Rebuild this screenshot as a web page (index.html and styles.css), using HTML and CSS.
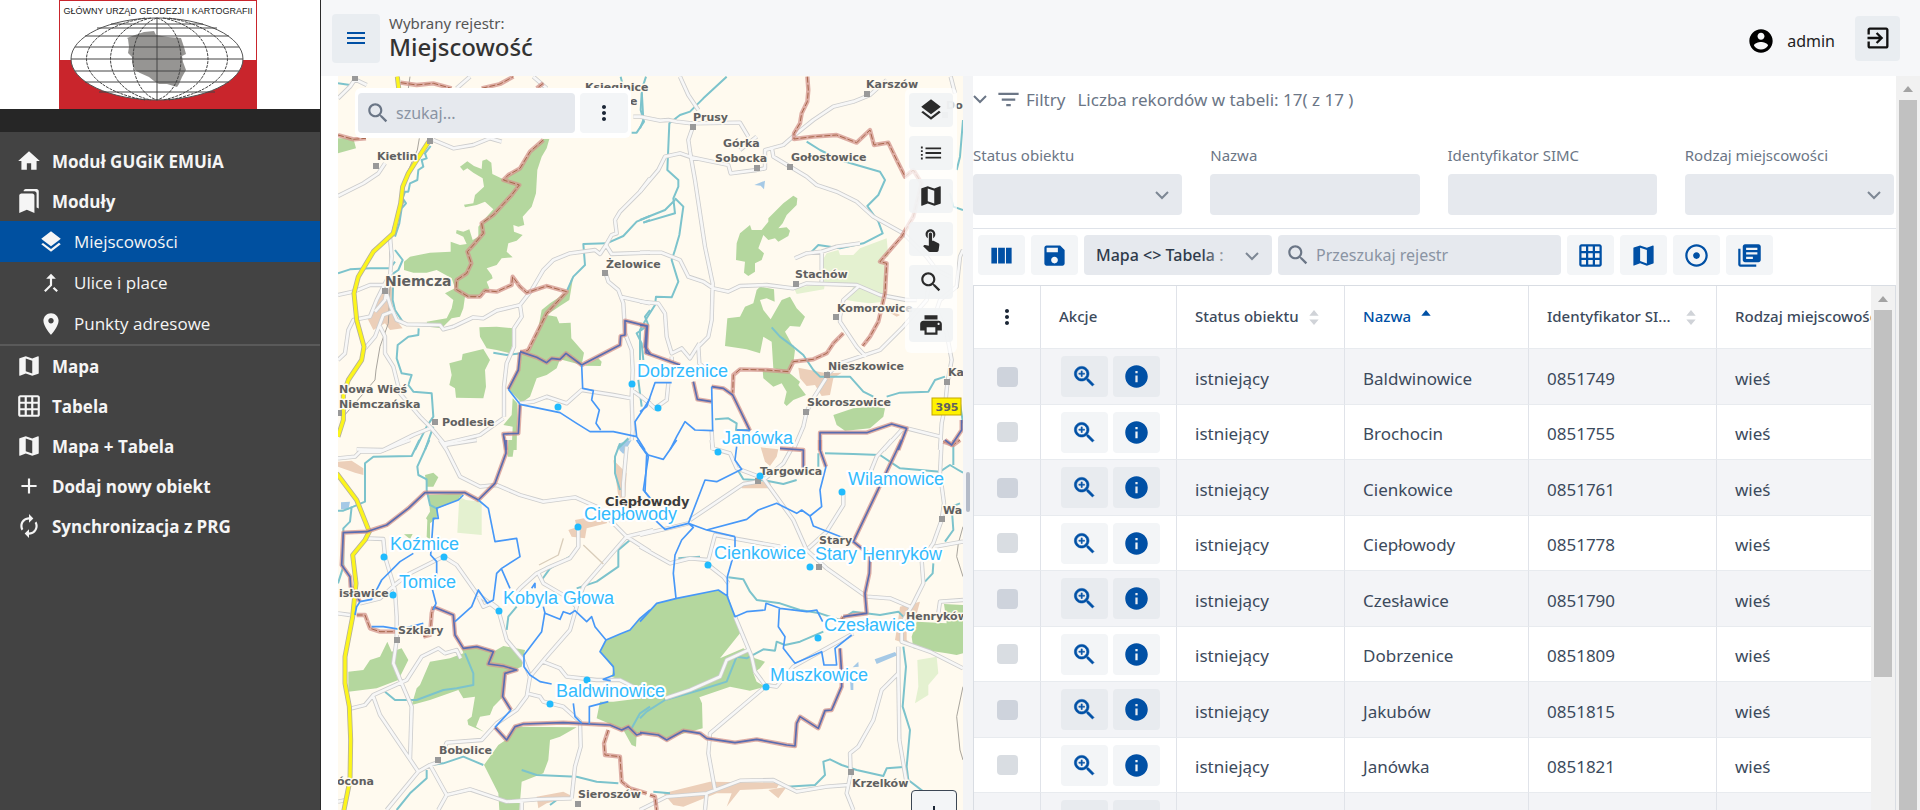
FILE: index.html
```html
<!DOCTYPE html>
<html lang="pl">
<head>
<meta charset="utf-8">
<title>EMUiA – Miejscowość</title>
<meta name="viewport" content="width=device-width, initial-scale=1">
<link rel="stylesheet" href="styles.css">
</head>
<body>
<svg class="sprite" aria-hidden="true">
  <symbol id="i-home" viewBox="0 0 24 24"><path d="M10 20v-6h4v6h5v-8h3L12 3 2 12h3v8z"/></symbol>
  <symbol id="i-bookmarks" viewBox="0 0 24 24"><path d="M19 18l2 1V3c0-1.1-.9-2-2-2H8.99C7.89 1 7 1.9 7 3h10c1.1 0 2 .9 2 2v13zM15 5H5c-1.1 0-2 .9-2 2v16l7-3 7 3V7c0-1.1-.9-2-2-2z"/></symbol>
  <symbol id="i-layers" viewBox="0 0 24 24"><path d="M11.99 18.54l-7.37-5.73L3 14.07l9 7 9-7-1.63-1.27-7.38 5.74zM12 16l7.36-5.73L21 9l-9-7-9 7 1.63 1.27L12 16z"/></symbol>
  <symbol id="i-merge" viewBox="0 0 24 24"><path d="M17 20.41L18.41 19 15 15.59 13.59 17 17 20.41zM7.5 8H11v5.59L5.59 19 7 20.41l6-6V8h3.5L12 3.5 7.5 8z"/></symbol>
  <symbol id="i-place" viewBox="0 0 24 24"><path d="M12 2C8.13 2 5 5.13 5 9c0 5.25 7 13 7 13s7-7.75 7-13c0-3.87-3.13-7-7-7zm0 9.5c-1.38 0-2.5-1.12-2.5-2.5s1.12-2.5 2.5-2.5 2.5 1.12 2.5 2.5-1.12 2.5-2.5 2.5z"/></symbol>
  <symbol id="i-map" viewBox="0 0 24 24"><path d="M20.5 3l-.16.03L15 5.1 9 3 3.36 4.9c-.21.07-.36.25-.36.48V20.5c0 .28.22.5.5.5l.16-.03L9 18.9l6 2.1 5.64-1.9c.21-.07.36-.25.36-.48V3.5c0-.28-.22-.5-.5-.5zM15 19l-6-2.11V5l6 2.11V19z"/></symbol>
  <symbol id="i-grid" viewBox="0 0 24 24"><path d="M20 2H4c-1.1 0-2 .9-2 2v16c0 1.1.9 2 2 2h16c1.1 0 2-.9 2-2V4c0-1.1-.9-2-2-2zM8 20H4v-4h4v4zm0-6H4v-4h4v4zm0-6H4V4h4v4zm6 12h-4v-4h4v4zm0-6h-4v-4h4v4zm0-6h-4V4h4v4zm6 12h-4v-4h4v4zm0-6h-4v-4h4v4zm0-6h-4V4h4v4z"/></symbol>
  <symbol id="i-add" viewBox="0 0 24 24"><path d="M19 13h-6v6h-2v-6H5v-2h6V5h2v6h6v2z"/></symbol>
  <symbol id="i-sync" viewBox="0 0 24 24"><path d="M12 6v3l4-4-4-4v3c-4.42 0-8 3.58-8 8 0 1.57.46 3.03 1.24 4.26L6.7 14.8c-.45-.83-.7-1.79-.7-2.8 0-3.31 2.69-6 6-6zm6.76 1.74L17.3 9.2c.44.84.7 1.79.7 2.8 0 3.31-2.69 6-6 6v-3l-4 4 4 4v-3c4.42 0 8-3.58 8-8 0-1.57-.46-3.03-1.24-4.26z"/></symbol>
  <symbol id="i-menu" viewBox="0 0 24 24"><path d="M3 18h18v-2H3v2zm0-5h18v-2H3v2zm0-7v2h18V6H3z"/></symbol>
  <symbol id="i-search" viewBox="0 0 24 24"><path d="M15.5 14h-.79l-.28-.27C15.41 12.59 16 11.11 16 9.5 16 5.91 13.09 3 9.5 3S3 5.91 3 9.5 5.91 16 9.5 16c1.61 0 3.09-.59 4.23-1.57l.27.28v.79l5 4.99L20.49 19l-4.99-5zm-6 0C7.01 14 5 11.99 5 9.5S7.01 5 9.5 5 14 7.01 14 9.5 11.99 14 9.5 14z"/></symbol>
  <symbol id="i-zoom" viewBox="0 0 24 24"><path d="M15.5 14h-.79l-.28-.27C15.41 12.59 16 11.11 16 9.5 16 5.91 13.09 3 9.5 3S3 5.91 3 9.5 5.91 16 9.5 16c1.61 0 3.09-.59 4.23-1.57l.27.28v.79l5 4.99L20.49 19l-4.99-5zm-6 0C7.01 14 5 11.99 5 9.5S7.01 5 9.5 5 14 7.01 14 9.5 11.99 14 9.5 14zm2.500-4h-2v2H9v-2H7V9h2V7h1v2h2v1z"/></symbol>
  <symbol id="i-more" viewBox="0 0 24 24"><path d="M12 8c1.1 0 2-.9 2-2s-.9-2-2-2-2 .9-2 2 .9 2 2 2zm0 2c-1.1 0-2 .9-2 2s.9 2 2 2 2-.9 2-2-.9-2-2-2zm0 6c-1.1 0-2 .9-2 2s.9 2 2 2 2-.9 2-2-.9-2-2-2z"/></symbol>
  <symbol id="i-list" viewBox="0 0 24 24"><path d="M1 5h2v2H1zM1 9h2v2H1zM1 13h2v2H1zM1 17h2v2H1zM6 6h17v2H6zM6 11h17v2H6zM6 16h17v2H6z"/></symbol>
  <symbol id="i-touch" viewBox="0 0 24 24"><path d="M9 11.24V7.5C9 6.12 10.12 5 11.5 5S14 6.12 14 7.5v3.74c1.21-.81 2-2.18 2-3.74C16 5.01 13.99 3 11.5 3S7 5.01 7 7.5c0 1.56.79 2.93 2 3.74zm9.84 4.63l-4.54-2.26c-.17-.07-.35-.11-.54-.11H13v-6c0-.83-.67-1.5-1.5-1.5S10 6.67 10 7.5v10.74l-3.43-.72c-.08-.01-.15-.03-.24-.03-.31 0-.59.13-.79.33l-.79.8 4.94 4.94c.27.27.65.44 1.06.44h6.79c.75 0 1.33-.55 1.44-1.28l.75-5.27c.01-.07.02-.14.02-.2 0-.62-.38-1.16-.91-1.38z"/></symbol>
  <symbol id="i-print" viewBox="0 0 24 24"><path d="M19 8H5c-1.66 0-3 1.34-3 3v6h4v4h12v-4h4v-6c0-1.66-1.34-3-3-3zm-3 11H8v-5h8v5zm3-7c-.55 0-1-.45-1-1s.45-1 1-1 1 .45 1 1-.45 1-1 1zm-1-9H6v4h12V3z"/></symbol>
  <symbol id="i-user" viewBox="0 0 24 24"><path d="M12 2C6.48 2 2 6.48 2 12s4.48 10 10 10 10-4.48 10-10S17.52 2 12 2zm0 3c1.66 0 3 1.34 3 3s-1.34 3-3 3-3-1.34-3-3 1.34-3 3-3zm0 14.2c-2.5 0-4.71-1.28-6-3.22.03-1.99 4-3.08 6-3.08 1.99 0 5.97 1.09 6 3.08-1.29 1.94-3.5 3.22-6 3.22z"/></symbol>
  <symbol id="i-exit" viewBox="0 0 24 24"><path d="M10.09 15.59L11.5 17l5-5-5-5-1.41 1.41L12.67 11H3v2h9.67l-2.58 2.59zM19 3H5c-1.11 0-2 .9-2 2v4h2V5h14v14H5v-4H3v4c0 1.1.89 2 2 2h14c1.1 0 2-.9 2-2V5c0-1.1-.9-2-2-2z"/></symbol>
  <symbol id="i-filter" viewBox="0 0 24 24"><path d="M10 18h4v-2h-4v2zM3 6v2h18V6H3zm3 7h12v-2H6v2z"/></symbol>
  <symbol id="i-chevron" viewBox="0 0 16 16"><path d="M2 5l6 6 6-6" fill="none" stroke="currentColor" stroke-width="2"/></symbol>
  <symbol id="i-columns" viewBox="0 0 24 24"><path d="M3 5h5v14H3zM9 5h6v14H9zM16 5h5v14h-5z"/></symbol>
  <symbol id="i-save" viewBox="0 0 24 24"><path d="M17 3H5c-1.11 0-2 .9-2 2v14c0 1.1.89 2 2 2h14c1.1 0 2-.9 2-2V7l-4-4zm-5 16c-1.66 0-3-1.34-3-3s1.34-3 3-3 3 1.34 3 3-1.34 3-3 3zm3-10H5V5h10v4z"/></symbol>
  <symbol id="i-adjust" viewBox="0 0 24 24"><path d="M12 2C6.49 2 2 6.49 2 12s4.49 10 10 10 10-4.49 10-10S17.51 2 12 2zm0 18c-4.41 0-8-3.59-8-8s3.59-8 8-8 8 3.59 8 8-3.59 8-8 8zm3-8c0 1.66-1.34 3-3 3s-3-1.34-3-3 1.34-3 3-3 3 1.34 3 3z"/></symbol>
  <symbol id="i-library" viewBox="0 0 24 24"><path d="M4 6H2v14c0 1.1.9 2 2 2h14v-2H4V6zm16-4H8c-1.1 0-2 .9-2 2v12c0 1.1.9 2 2 2h12c1.1 0 2-.9 2-2V4c0-1.1-.9-2-2-2zm-1 9H9V9h10v2zm-4 4H9v-2h6v2zm4-8H9V5h10v2z"/></symbol>
  <symbol id="i-info" viewBox="0 0 24 24"><path d="M12 2C6.48 2 2 6.48 2 12s4.48 10 10 10 10-4.48 10-10S17.52 2 12 2zm1 15h-2v-6h2v6zm0-8h-2V7h2v2z"/></symbol>
  <symbol id="i-sort" viewBox="0 0 10 16"><path d="M0 6l5-6 5 6zM0 10h10l-5 6z"/></symbol>
  <symbol id="i-sort-up" viewBox="0 0 10 16"><path d="M0 6l5-6 5 6z"/></symbol>
  <symbol id="i-up" viewBox="0 0 10 6"><path d="M0 6l5-6 5 6z"/></symbol>
</svg>

<div class="app">
  <aside class="sidebar">
    <div class="logo">
      <svg class="logo-img" viewBox="60 0 198 109" role="img" aria-label="Główny Urząd Geodezji i Kartografii">
        <rect x="60" y="0" width="198" height="109" fill="#c9252c"/>
        <rect x="61" y="1" width="196" height="59" fill="#fff"/>
        <ellipse cx="158" cy="59" rx="86" ry="41" fill="#fff" stroke="#555" stroke-width="1"/>
        <path fill="#969593" d="M128 38l8-3 9-3 10-1 2 4 12 2 13 1 3 9 2 7-4 2 1 6 3 8-4 7-3 7-2 3-10-3-8 0-5-3-5-4-9-4-5-3-3-7 0-6-4-4 1-6-1-8z"/>
        <g fill="none" stroke="#444" stroke-width="1">
          <path d="M158 18v82M112 24h92M98 28h120M86 36h144M76 47h164M72 59h172M76 71h164M86 82h144M100 92h116"/>
          <path d="M158 18c-32 10-32 72 0 82M158 18c32 10 32 72 0 82M152 18c-54 12-54 70 0 82M164 18c60 12 60 70 0 82M146 18c-78 14-78 68 0 82M170 18c78 14 78 68 0 82" stroke-dasharray="3 1"/>
        </g>
        <text class="logo-text" x="159" y="14" text-anchor="middle">GŁÓWNY URZĄD GEODEZJI I KARTOGRAFII</text>
      </svg>
    </div>
    <div class="logo-strip"></div>
    <nav class="nav">
      <a class="nav-item" href="#"><svg class="icon"><use href="#i-home"/></svg>Moduł GUGiK EMUiA</a>
      <a class="nav-item" href="#"><svg class="icon"><use href="#i-bookmarks"/></svg>Moduły</a>
      <div class="nav-sub">
        <a class="nav-item sub active" href="#"><svg class="icon"><use href="#i-layers"/></svg>Miejscowości</a>
        <a class="nav-item sub" href="#"><svg class="icon"><use href="#i-merge"/></svg>Ulice i place</a>
        <a class="nav-item sub" href="#"><svg class="icon"><use href="#i-place"/></svg>Punkty adresowe</a>
      </div>
      <a class="nav-item" href="#"><svg class="icon"><use href="#i-map"/></svg>Mapa</a>
      <a class="nav-item" href="#"><svg class="icon"><use href="#i-grid"/></svg>Tabela</a>
      <a class="nav-item" href="#"><svg class="icon"><use href="#i-map"/></svg>Mapa + Tabela</a>
      <a class="nav-item" href="#"><svg class="icon"><use href="#i-add"/></svg>Dodaj nowy obiekt</a>
      <a class="nav-item" href="#"><svg class="icon"><use href="#i-sync"/></svg>Synchronizacja z PRG</a>
    </nav>
  </aside>

  <div class="main">
    <header class="topbar">
      <button class="menu-btn" type="button" aria-label="Menu"><svg class="icon"><use href="#i-menu"/></svg></button>
      <div class="register">
        <p class="register-label">Wybrany rejestr:</p>
        <h1 class="register-name">Miejscowość</h1>
      </div>
      <div class="user">
        <div class="user-name"><svg class="icon user-icon"><use href="#i-user"/></svg><span>admin</span></div>
        <button class="exit-btn" type="button" aria-label="Wyloguj"><svg class="icon"><use href="#i-exit"/></svg></button>
      </div>
    </header>

    <div class="content">
      <section class="map" aria-label="Mapa">
        <svg class="map-canvas" viewBox="338 76 625 734" preserveAspectRatio="xMinYMin slice">
          <defs>
            <g id="roads">
              <path class="nw" d="M24 85L60 50 75 28 110 45M310 210L370 235 430 225 480 205 515 215M24 378L100 340 145 310 165 280M180 500L185 560 180 620 170 660 165 690 135 725M24 675L70 665 120 645 160 645M380 55L420 20M610 20L650 55M170 670L182 710 200 750 230 763 330 765 340 778 370 770 430 742 460 745 500 722 570 705 605 660 640 600 670 570 720 550 795 540 810 552 828 525 845 495 860 490 855 450 870 425 930 365 960 325M828 525L845 552 960 548M828 612L835 635 865 660 880 700 885 790 905 840 908 900 905 985 908 1080 905 1110M870 680L960 700M570 705L575 740 552 775 552 830 530 880 522 950 522 1040M185 725L160 735 135 800 105 835M150 770L165 800 165 850 190 890 210 970 270 1040 300 1070 350 1130M24 870L45 850 55 780 70 750 120 740 140 690 165 640 185 605M300 1075L250 1095 160 1140 80 1138M345 1120L450 1095 520 1045M568 1000L610 995 650 980 710 1000 755 960 850 975 905 985M905 960L960 1000"/>
              <path class="ne" d="M-20 140L0 140 60 152 85 150 110 155 155 160 300 158 325 200M120 20L145 75 175 120M158 172L145 210 150 245 165 330 195 530 218 640 215 750 205 800 175 830 178 880 200 900M155 262L265 285 272 310 350 300M300 240L350 200M0 365L55 300 75 260 120 250 155 262M350 300L375 295 375 240 430 225 470 190 520 150 580 110 640 95 690 75 740 30M395 230L400 260 450 290 500 320 530 345 590 365 650 395 700 440 790 490 860 560 890 600 930 620M0 548L65 548 120 570 145 620 190 635 220 655 265 665 300 648 380 645 460 655 500 640 650 645 720 675 800 690 830 690M0 695L55 700 75 730 80 800 95 850 125 835 150 865 178 820M95 860L95 880M545 635L545 545M465 565L500 550 545 545 590 530 660 520M655 650L610 690 600 740 600 755 650 830 678 860M560 915L600 880 720 840 790 770 860 690 870 610M558 925L520 985 500 1025 490 1070 460 1140M932 20L945 70M922 940L935 870 920 790 890 720 900 690 950 650 960 560 969 540M922 940L915 1010 905 1060 900 1140M800 1075L900 1100M785 1080L730 1140M215 1080L218 1140M85 940L80 990 45 1015 0 975"/>
              <path class="sw" d="M24 55L75 50 90 35 150 35 200 15 240 0M330 0L350 30 390 110 450 140 500 135 570 165 640 185 735 172 800 200 850 250 890 290 960 335M345 15L440 0M110 295L160 297 165 350 195 450 200 530 200 600 190 670 215 730 245 800 240 960M90 490L150 475 200 430 240 400 340 350 380 375 440 460 505 510 530 600 580 660 600 710 590 770 560 810 500 850 455 900 350 908 345 920M445 470L460 500 485 490 505 505M745 265L745 320 720 355 650 385 620 400 570 445 550 470M625 400L640 430 700 465 740 500 720 570 650 650 600 710M740 495L760 440 890 290 970 270M640 665L690 685 710 710 800 720 870 720 920 745M590 760L630 770 640 785 700 800 750 845 752 920 735 980 725 1075M24 520L60 525M65 805L105 795 130 765 230 720 275 650 325 625 345 640 380 630 392 655M130 770L150 825 265 995 170 1110M265 995L300 975 330 965M300 975L350 1065 325 1110M350 1065L420 1048 530 1085 620 1078 725 1075M575 1080L575 1110M890 20L880 130 880 170M24 1085L50 1080"/>
              <path class="se" d="M215 0L218 25 270 40 290 85 370 115 460 240 500 330 560 385 680 470 750 475 810 500M150 240L310 132 355 125M145 250L0 285M205 360L225 285 420 320M0 320L90 370 150 355 205 360M370 120L430 70 455 25M610 160L610 195 560 275 505 325M755 0L710 50 690 100M905 0L900 100 912 190 905 240 880 310 845 360 850 430 820 490 785 550 785 605 870 635 969 685M885 320L969 305M895 520L900 485 969 480M205 375L250 410 265 430M285 530L335 650 345 695 375 735 410 740 430 715 460 680 640 580M370 745L210 880 205 940 225 1050M75 775L150 750 240 710 260 660 325 630M775 620L775 700 778 900 800 1030M775 700L725 750 700 840 655 920 630 940 632 1000 620 1060 640 1110M0 1110L80 1070 200 1060 300 1022 400 1020 470 1055 560 1040 625 1035M200 1060L195 1110"/>
            </g>
            <g id="highway">
              <path class="nw" d="M202 20L206 55M296 215L270 255 235 310 218 350 212 400 190 490 130 545 85 620 72 670 80 750 102 830 95 870 55 930 40 975 40 1050 24 1100"/>
              <path class="sw" d="M20 100L80 180 118 275 105 300 68 345 78 430 68 530 45 650 45 730 58 800 62 900 60 1020 40 1120"/>
            </g>
            <g id="county">
              <path class="nw" d="M212 38L260 45 310 40 365 55M455 55L510 42 550 20M640 40L620 55M24 195L70 208 108 205M640 210L600 245 570 295 535 315 520 330 568 345 545 375 490 435 455 460 460 490 430 525 412 545 424 580 410 610 380 630 378 658 415 680 450 680 465 662 500 665 545 645 548 620 570 650 590 668 650 648 710 665 650 730 620 790 595 840 572 848"/>
              <path class="ne" d="M502 20L505 60 502 95 485 130 480 160 462 190 462 207 520 200 590 195 650 218 690 180 702 225 745 218 770 270 795 320 820 300 845 340 820 440 785 500 720 575 740 580 735 670 715 755 690 800 668 828M610 790L580 820 560 850 520 868 460 875 445 905 380 900 300 898 280 915 278 970"/>
              <path class="sw" d="M80 525L105 525 120 565 150 575 195 575M280 590L300 585 305 520 310 500M835 870L822 910 825 945 870 950 875 1025 900 1045 950 1060"/>
              <path class="se" d="M910 5L940 15 960 0M30 1065L45 1070 50 1110M600 545L610 530"/>
            </g>
            <g id="commune">
              <path class="nw" d="M570 845L620 862 650 878 665 865 690 868 708 850 755 885 870 825 872 798 885 795 885 752 950 768 945 830 960 852M570 848L565 900 535 958M570 1003L565 1090 520 1092 528 1140"/>
              <path class="ne" d="M0 765L22 768 18 848 120 885M160 935L172 988 215 995M215 950L250 955 278 975 330 1082M540 1140L540 1088 680 1088 755 1062 800 1075 775 1140M915 1110L935 1125 965 1080 965 1050"/>
              <path class="sw" d="M528 0L528 40 495 130 445 180 405 158 285 158 235 205 170 255 110 275 40 278 35 375 60 410 62 440 90 485M310 500L370 525 375 585 400 625 440 620 490 635 475 672 520 678 560 690 525 700 518 770 543 810M495 862L530 900 555 860 580 852 700 848 840 855 875 870 895 860 920 885 935 880"/>
              <path class="se" d="M785 0L640 305 690 345 688 400 675 460 680 520 610 530M600 625L605 700 605 740 575 810 555 812 535 865 480 830 470 850 465 918 440 915 350 898 285 908 200 895 180 880 130 872 80 900 55 885 0 878M420 25L490 30 490 90M540 0L540 30 558 80"/>
            </g>
          </defs>
          <rect class="land" x="338" y="76" width="900" height="1200"/>
          <g class="forest">
            <path class="nw" d="M658 207L650 235 635 260 622 300 618 370 605 410 578 440 583 465 565 470 550 465 552 485 578 495 560 512 535 520 530 545 548 562 515 565 500 585 470 595 485 615 488 625 470 635 478 655 455 670 435 683 405 680 400 715 390 740 365 745 335 775 295 770 290 755 350 745 365 715 370 690 345 670 375 655 365 625 320 600 290 608 250 608 222 600 222 575 240 560 300 548 362 545 362 515 390 525 410 522 400 500 378 490 380 480 400 485 418 478 428 510 445 500 445 470 470 440 490 418 465 395 440 405 405 412 402 404 430 400 435 375 462 350 458 325 430 308 412 295 400 302 390 290 412 274 432 288 455 297 457 272 470 268 484 278 487 312 520 328 570 298 600 245 640 207ZM24 205L70 205 78 235 24 250ZM448 772L500 770 550 775 552 805 540 850 500 840 470 835 450 800ZM358 880L395 870 398 852 460 837 480 870 465 900 468 950 460 985 378 983 375 955 358 945 365 915ZM712 665L722 630 730 618 718 690 690 708 650 735 680 740 688 760 722 758 724 805 762 848 755 885 690 868 680 895 650 915 620 925 600 980 575 998 535 958 560 900 570 850 600 840 625 775 635 720 660 700ZM765 887L805 865 815 875 812 888ZM548 985L562 1000 560 1140 545 1140 548 1070 520 1065 545 1035Z"/>
            <path class="ne" d="M460 377L472 385 470 405 440 435 428 460 415 475 440 472 450 482 445 498 415 515 405 505 385 510 370 495 355 535 372 550 365 570 345 580 345 605 325 618 312 608 315 575 288 570 290 520 300 490 330 465 335 480 365 480 385 455 385 445 430 400ZM360 650L402 658 404 695 380 685 360 690 370 720 392 748 425 690 450 680 470 715 495 740 480 770 450 768 435 785 465 840 460 880 445 905 400 895 395 815 370 800 360 850 320 838 255 828 262 745 300 740 315 710 340 700 350 660ZM368 900L448 908 480 935 475 945 498 975 460 990 440 1008 432 1000 440 965 425 940 400 950 370 925ZM580 1035L640 1015 700 1010 735 1015 730 1040 690 1075 640 1080 615 1082 590 1065Z"/>
            <path class="sw" d="M285 105L310 98 325 112 310 140 290 140ZM295 165L400 160 385 180 325 205 320 235 300 250 300 300 290 290 292 240 288 235 300 215ZM535 0L555 0 548 50 533 50ZM172 605L185 635 215 625 235 660 205 720 140 745 55 755 55 695 100 690 120 660 150 650ZM300 665L360 655 400 640 395 625 430 620 490 635 520 618 585 630 575 680 525 700 515 775 490 800 480 825 450 830 438 860 462 875 415 855 412 840 425 830 435 770 400 775 385 750 300 780 245 795 260 745 270 735ZM740 862L690 890 660 900 655 960 640 1000 575 1025 568 1110 508 1110 505 1060 462 975 505 915 535 895 555 860ZM828 600L870 582 900 570 930 535 965 505 965 765 920 745 870 720 845 710 850 685 810 635ZM810 785L850 785 970 770 970 880 905 880 800 835ZM880 870L920 880 918 920 905 915ZM222 283L248 282 240 297Z"/>
            <path class="se" d="M0 540L50 490 110 475 235 450 265 470 300 580 240 655 310 625 325 635 345 655 375 665 360 685 340 700 350 725 375 740 330 752 270 740 178 772 186 790 188 865 80 895 0 870ZM912 492L969 495 969 640 950 645 920 640 820 625 815 590 830 545 920 550Z"/>
          </g>
          <g class="meadow">
            <path class="ne" d="M545 575L560 550 595 540 600 555 640 555 660 535 740 505 745 560 725 560 740 600 735 670 730 695 690 700 650 695 620 690 640 650 550 635ZM462 655L555 640 552 658 470 672Z"/>
            <path class="sw" d="M388 170L408 180 455 185 455 285 382 278Z"/>
            <path class="se" d="M832 660L890 650 895 700 865 735 865 765 825 790 835 740Z"/>
          </g>
          <g class="urban">
            <path class="nw" d="M165 650L185 640 188 700 190 740 218 775 180 780 165 760 130 780 112 745 140 700Z"/>
            <path class="ne" d="M475 893L560 910 605 908 580 925 570 975 545 978 525 945 500 948 480 925ZM740 715L780 735 770 740 745 725Z"/>
            <path class="sw" d="M24 65L65 62 100 85 100 105 75 98 24 80ZM850 60L890 100 885 180 865 170ZM735 240L840 220 830 250 770 265 765 295 725 290 715 270 740 262ZM620 1070L700 1055 730 1070 650 1090 625 1105Z"/>
            <path class="se" d="M362 22L415 28 410 50 390 78 375 65ZM310 125L390 125 395 145 305 145ZM780 500L840 485 825 540 800 560 800 600 825 620 765 600 770 570ZM70 1060L210 1025 420 1028 410 1045 300 1050 260 1100 275 1060 230 1060 130 1100 100 1095ZM385 1050L440 1040 415 1075Z"/>
          </g>
          <g class="pond">
            <path class="nw" d="M862 1130L900 1105 880 1140Z"/>
            <path class="ne" d="M343 345L375 332 372 358 362 347Z"/>
            <path class="sw" d="M33 187L60 185 55 210 33 208ZM868 10L905 0 880 42 868 30Z"/>
            <path class="se" d="M704 658L765 636 772 646 710 672ZM630 715L640 710 640 750 632 750ZM638 682L655 665 656 680Z"/>
          </g>
          <g class="river">
            <path class="nw" d="M24 610L60 598 120 595 180 595 195 575M872 20L878 45M935 70L932 120 942 155 920 188 905 188M302 228L285 250 290 265 275 270 280 290 265 300 262 330 240 340 235 365 225 365 218 385 228 400 215 415 208 460 195 500M195 540L218 570 205 600 190 610 188 690 195 720 218 755M266 775L265 795 235 800 203 825 200 865 215 910 245 915 235 945 250 965 305 970 310 1040 290 1070 255 1140M310 1070L285 1140M960 438L920 455 880 498 830 520 760 522 765 585 730 620 712 660M960 720L945 740 955 765 920 790 935 820 940 870M490 848L530 855 575 850M24 40L60 45M940 458L960 450M895 1105L865 1135M925 930L935 1010"/>
            <path class="ne" d="M18 20L5 60 10 150 0 175M260 20L190 85 150 125 120 135 88 160 82 300 115 330 115 350 100 385 105 430 10 458M105 385L130 410 118 495 105 540 95 570 115 635 95 682 48 680 45 705 20 745 0 780 0 870M105 390L75 420 0 450M500 215L540 240 600 270 650 285 720 305 735 330 715 375 682 408 715 455 728 490 670 520 600 535 535 525 515 545M395 772L420 800 460 830 490 855 520 900 540 920 630 920 670 965 700 980M740 980L780 968 865 965 885 930 915 920M969 150L960 260 950 300M930 370L940 410 969 420M225 1048L265 1045 290 1060 288 1080 330 1080M960 1000L969 1060M465 565L490 555"/>
            <path class="sw" d="M268 0L245 48 130 50 105 70 105 185 70 200 40 212 24 212M298 0L262 80 265 105 290 118 290 150 300 195 320 205M65 200L60 245 40 265 40 380 24 430M870 10L855 50 855 100 870 150M405 640L430 700 430 735 380 745 340 750 260 780 195 780 165 755M720 350L660 385 635 420M900 300L865 330 865 380 800 425 740 445M560 500L535 530 530 570M305 975L340 970 400 950 460 975M290 990L290 1015 240 1060 200 1110M575 990L620 1005 740 1010 800 1025 865 1030M960 800L930 820 905 865 875 870M660 1095L680 1080"/>
            <path class="se" d="M555 40L640 42 720 45 780 85 900 95 930 75 955 90 969 98M940 0L940 75M535 80L535 40M470 120L430 132 380 122 310 118 290 85M960 190L935 200 940 270 915 305M880 370L878 400 855 425M115 355L180 350M265 412L310 418 330 455 350 480 420 490 480 510 540 520 600 540 640 515 720 525 775 515 790 530M210 375L240 400M550 575L480 605 435 615 410 605 405 632 370 628 320 655 290 650 260 725 180 750 75 780 20 815 0 835M790 620L798 680 788 800 810 870 800 980 740 985 730 1008 650 990 605 975 570 958 550 965 555 1005 525 1035 440 1040 415 1025M800 980L805 1020 870 1070 885 1100M40 1055L90 1060"/>
          </g>
          <g class="rail">
            <path class="nw" d="M240 20L235 55M268 205L262 240 222 330 220 400 190 470 178 520 182 600 178 700 175 760 150 830 138 900 135 930 40 1040"/>
            <path class="se" d="M969 260L955 310 950 350 969 410M969 740L950 830 960 930 969 960"/>
          </g>
          <use class="road-case" href="#roads"/>
          <use class="road-fill" href="#roads"/>
          <path class="sw track" d="M700 295L685 345 627 375M760 315L820 372"/>
          <use class="hw-case" href="#highway"/>
          <use class="hw-fill" href="#highway"/>
          <use class="border-glow" href="#county"/>
          <use class="border-dash" href="#county"/>
          <use class="border-glow" href="#commune"/>
          <use class="border-blue" href="#commune"/>
          <g class="village-line">
            <path class="nw" d="M535 958L570 1003 690 1028 740 1060 780 1085 850 1085 920 1100 915 1055 945 1010 960 985M755 885L758 955 790 962 785 990 808 1020 798 1060 812 1080M920 1100L945 1140"/>
            <path class="ne" d="M215 950L218 1082 165 1080 135 1055 110 1100 90 1140M95 938L45 938 20 1010 0 1025M290 1080L330 1082"/>
            <path class="sw" d="M543 810L495 862M90 485L125 478 155 420 210 365 250 340M400 165L385 180 320 205 325 235 310 235 302 345 320 365 320 430 305 440 318 490 310 510M445 180L475 205 495 305 560 295 570 350 515 385 500 400 490 480 472 490 445 450 425 500 375 545M515 388L540 445M75 525L80 500 90 485M125 560L160 560 210 568 280 550M645 515L635 575 582 645 582 680 600 705 630 725 665 732M640 500L645 520 690 538 700 515 720 522 735 512 770 545 785 530 795 560 828 600 870 582 900 570 930 535 960 510M828 600L810 635 850 680 852 705 820 718 842 722M730 790L735 830 755 850M835 785L778 800 778 852M605 445L615 430 615 445M920 0L955 50 940 150 960 175"/>
            <path class="se" d="M0 15L25 45 70 58 110 0M20 45L15 155 40 185M290 20L285 60 305 88 230 125 195 120 145 250 160 262 125 300 105 345 100 400 108 475M145 250L200 270 285 290M200 270L320 238 355 210 410 190 470 220 485 210 510 228 545 200 540 150 558 80M510 228L520 258 640 305M285 290L285 330 262 410 262 470 285 530 320 515 375 510 378 490 420 505 500 515 530 510 548 545M265 470L235 450 110 475 50 490 0 545M418 505L415 560 435 590 430 625 465 670 545 635 552 675 590 675 585 625 635 585M40 235L75 268 145 250"/>
          </g>
          <g class="squares"><path d="M373 163h6v6h-6zM427 138h6v6h-6zM382 288h6v6h-6zM432 419h6v6h-6zM338 410h4v6h-4zM352 76h6v5h-6zM864 91h6v6h-6zM690 124h6v6h-6zM754 165h6v6h-6zM787 164h6v6h-6zM602 270h6v6h-6zM793 281h6v6h-6zM833 314h6v6h-6zM824 372h6v6h-6zM803 409h6v6h-6zM944 379h6v6h-6zM394 637h6v6h-6zM435 757h6v6h-6zM575 801h6v6h-6zM848 769h6v6h-6zM816 564h6v6h-6zM939 516h6v6h-6zM755 478h6v6h-6zM942 112h6v6h-6z"/></g>
          <g class="base-labels">
            <text x="585" y="91">Księginice</text><text x="630" y="105">e</text>
            <text x="377" y="160">Kietlin</text><text class="town" x="385" y="286">Niemcza</text>
            <text x="339" y="393">Nowa Wieś</text><text x="339" y="408">Niemczańska</text>
            <text x="442" y="426">Podlesie</text><text x="866" y="88">Karszów</text>
            <text x="693" y="121">Prusy</text><text x="723" y="147">Górka</text><text x="715" y="162">Sobocka</text>
            <text x="791" y="161">Gołostowice</text><text x="946" y="109">Do</text>
            <text x="606" y="268">Żelowice</text><text x="795" y="278">Stachów</text>
            <text x="837" y="312">Komorowice</text><text x="828" y="370">Nieszkowice</text>
            <text x="948" y="376">Ka</text><text x="807" y="406">Skoroszowice</text>
            <text x="760" y="475">Targowica</text><text class="seat" x="605" y="506">Ciepłowody</text>
            <text x="943" y="514">Wa</text><text x="819" y="544">Stary</text><text x="906" y="620">Henryków</text>
            <text x="398" y="634">Szklary</text><text x="339" y="597">isławice</text>
            <text x="439" y="754">Bobolice</text><text x="337" y="785">ócona</text>
            <text x="578" y="798">Sieroszów</text><text x="852" y="787">Krzelków</text>
          </g>
          <rect x="932" y="398" width="29" height="17" fill="#fff200" stroke="#c3a500"/>
          <text class="shield" x="947" y="411" text-anchor="middle">395</text>
          <path class="dots" d="M632 384h0M558 407h0M658 408h0M718 452h0M760 476h0M842 492h0M578 527h0M384 557h0M444 557h0M393 595h0M499 611h0M708 565h0M810 567h0M818 638h0M766 687h0M587 680h0M550 704h0"/>
          <g class="place-labels">
            <text x="637" y="377">Dobrzenice</text><text x="722" y="444">Janówka</text><text x="584" y="520">Ciepłowody</text>
            <text x="848" y="485">Wilamowice</text><text x="390" y="550">Koźmice</text><text x="399" y="588">Tomice</text>
            <text x="714" y="559">Cienkowice</text><text x="815" y="560">Stary Henryków</text><text x="503" y="604">Kobyla Głowa</text>
            <text x="824" y="631">Czesławice</text><text x="770" y="681">Muszkowice</text><text x="556" y="697">Baldwinowice</text>
          </g>
        </svg>
        <div class="map-search">
          <label class="search-box"><svg class="icon"><use href="#i-search"/></svg><input type="text" placeholder="szukaj..." aria-label="Szukaj na mapie"></label>
          <button class="more-btn" type="button" aria-label="Więcej"><svg class="icon"><use href="#i-more"/></svg></button>
        </div>
        <div class="map-tools">
          <button type="button" aria-label="Warstwy"><svg class="icon"><use href="#i-layers"/></svg></button>
          <button type="button" aria-label="Legenda"><svg class="icon"><use href="#i-list"/></svg></button>
          <button type="button" aria-label="Mapa"><svg class="icon"><use href="#i-map"/></svg></button>
          <button type="button" aria-label="Wskaż"><svg class="icon"><use href="#i-touch"/></svg></button>
          <button type="button" aria-label="Wyszukaj"><svg class="icon"><use href="#i-search"/></svg></button>
          <button type="button" aria-label="Drukuj"><svg class="icon"><use href="#i-print"/></svg></button>
        </div>
        <button class="map-zoom" type="button" aria-label="Przybliż"><svg class="icon"><use href="#i-add"/></svg></button>
      </section>

      <div class="splitter"><span class="splitter-grip"></span></div>

      <section class="panel">
        <div class="panel-body">
          <div class="filters">
            <div class="filters-head">
              <svg class="icon chevron"><use href="#i-chevron"/></svg>
              <svg class="icon funnel"><use href="#i-filter"/></svg>
              <span>Filtry</span>
              <span class="count">Liczba rekordów w tabeli: 17( z 17 )</span>
            </div>
            <form class="filter-grid">
              <div class="field"><label for="f-status">Status obiektu</label><div class="select"><select id="f-status"><option></option></select><svg class="icon chevron"><use href="#i-chevron"/></svg></div></div>
              <div class="field"><label for="f-name">Nazwa</label><input id="f-name" type="text"></div>
              <div class="field"><label for="f-simc">Identyfikator SIMC</label><input id="f-simc" type="text"></div>
              <div class="field"><label for="f-kind">Rodzaj miejscowości</label><div class="select"><select id="f-kind"><option></option></select><svg class="icon chevron"><use href="#i-chevron"/></svg></div></div>
            </form>
          </div>

          <div class="toolbar">
            <button class="tool" type="button" aria-label="Kolumny"><svg class="icon"><use href="#i-columns"/></svg></button>
            <button class="tool" type="button" aria-label="Zapisz"><svg class="icon"><use href="#i-save"/></svg></button>
            <div class="select view-select"><select aria-label="Widok"><option>Mapa &lt;&gt; Tabela :</option></select><span class="fade"></span><svg class="icon chevron"><use href="#i-chevron"/></svg></div>
            <label class="search-box table-search"><svg class="icon"><use href="#i-search"/></svg><input type="text" placeholder="Przeszukaj rejestr" aria-label="Przeszukaj rejestr"></label>
            <button class="tool" type="button" aria-label="Tabela"><svg class="icon"><use href="#i-grid"/></svg></button>
            <button class="tool" type="button" aria-label="Mapa"><svg class="icon"><use href="#i-map"/></svg></button>
            <button class="tool" type="button" aria-label="Wyśrodkuj"><svg class="icon"><use href="#i-adjust"/></svg></button>
            <button class="tool" type="button" aria-label="Raporty"><svg class="icon"><use href="#i-library"/></svg></button>
          </div>

          <div class="table-frame">
            <div class="table-clip">
              <table class="table">
                <colgroup><col class="c-check"><col class="c-actions"><col class="c-status"><col class="c-name"><col class="c-simc"><col class="c-kind"></colgroup>
                <thead>
                  <tr>
                    <th class="check"><svg class="icon"><use href="#i-more"/></svg></th>
                    <th>Akcje</th>
                    <th>Status obiektu<svg class="sort"><use href="#i-sort"/></svg></th>
                    <th class="sorted">Nazwa<svg class="sort"><use href="#i-sort-up"/></svg></th>
                    <th><span class="th-wide">Identyfikator SI...</span><svg class="sort"><use href="#i-sort"/></svg></th>
                    <th>Rodzaj miejscowości</th>
                  </tr>
                </thead>
                <tbody>
                  <tr><td class="check"><input type="checkbox" aria-label="Zaznacz Baldwinowice"></td><td class="actions"><button type="button" aria-label="Przybliż"><svg class="icon"><use href="#i-zoom"/></svg></button><button type="button" aria-label="Informacje"><svg class="icon info"><use href="#i-info"/></svg></button></td><td>istniejący</td><td>Baldwinowice</td><td>0851749</td><td>wieś</td></tr>
                  <tr><td class="check"><input type="checkbox" aria-label="Zaznacz Brochocin"></td><td class="actions"><button type="button" aria-label="Przybliż"><svg class="icon"><use href="#i-zoom"/></svg></button><button type="button" aria-label="Informacje"><svg class="icon info"><use href="#i-info"/></svg></button></td><td>istniejący</td><td>Brochocin</td><td>0851755</td><td>wieś</td></tr>
                  <tr><td class="check"><input type="checkbox" aria-label="Zaznacz Cienkowice"></td><td class="actions"><button type="button" aria-label="Przybliż"><svg class="icon"><use href="#i-zoom"/></svg></button><button type="button" aria-label="Informacje"><svg class="icon info"><use href="#i-info"/></svg></button></td><td>istniejący</td><td>Cienkowice</td><td>0851761</td><td>wieś</td></tr>
                  <tr><td class="check"><input type="checkbox" aria-label="Zaznacz Ciepłowody"></td><td class="actions"><button type="button" aria-label="Przybliż"><svg class="icon"><use href="#i-zoom"/></svg></button><button type="button" aria-label="Informacje"><svg class="icon info"><use href="#i-info"/></svg></button></td><td>istniejący</td><td>Ciepłowody</td><td>0851778</td><td>wieś</td></tr>
                  <tr><td class="check"><input type="checkbox" aria-label="Zaznacz Czesławice"></td><td class="actions"><button type="button" aria-label="Przybliż"><svg class="icon"><use href="#i-zoom"/></svg></button><button type="button" aria-label="Informacje"><svg class="icon info"><use href="#i-info"/></svg></button></td><td>istniejący</td><td>Czesławice</td><td>0851790</td><td>wieś</td></tr>
                  <tr><td class="check"><input type="checkbox" aria-label="Zaznacz Dobrzenice"></td><td class="actions"><button type="button" aria-label="Przybliż"><svg class="icon"><use href="#i-zoom"/></svg></button><button type="button" aria-label="Informacje"><svg class="icon info"><use href="#i-info"/></svg></button></td><td>istniejący</td><td>Dobrzenice</td><td>0851809</td><td>wieś</td></tr>
                  <tr><td class="check"><input type="checkbox" aria-label="Zaznacz Jakubów"></td><td class="actions"><button type="button" aria-label="Przybliż"><svg class="icon"><use href="#i-zoom"/></svg></button><button type="button" aria-label="Informacje"><svg class="icon info"><use href="#i-info"/></svg></button></td><td>istniejący</td><td>Jakubów</td><td>0851815</td><td>wieś</td></tr>
                  <tr><td class="check"><input type="checkbox" aria-label="Zaznacz Janówka"></td><td class="actions"><button type="button" aria-label="Przybliż"><svg class="icon"><use href="#i-zoom"/></svg></button><button type="button" aria-label="Informacje"><svg class="icon info"><use href="#i-info"/></svg></button></td><td>istniejący</td><td>Janówka</td><td>0851821</td><td>wieś</td></tr>
                  <tr><td class="check"></td><td class="actions"><button type="button" aria-label="Przybliż"></button><button type="button" aria-label="Informacje"></button></td><td></td><td></td><td></td><td></td></tr>
                </tbody>
              </table>
            </div>
            <div class="scrollbar inner"><svg class="scroll-up"><use href="#i-up"/></svg><span class="thumb"></span></div>
          </div>
        </div>
        <div class="scrollbar outer"><svg class="scroll-up"><use href="#i-up"/></svg><span class="thumb"></span></div>
      </section>
    </div>
  </div>
</div>
</body>
</html>
```
FILE: styles.css
```css
* { box-sizing: border-box; }

body {
  margin: 0;
  height: 100vh;
  overflow: hidden;
  background: #fff;
  color: #3c4a5c;
  font-family: "Noto Sans", "Open Sans", sans-serif;
  font-size: 16px;
}

button, input, select { font: inherit; color: inherit; border: 0; margin: 0; }
button { padding: 0; display: flex; align-items: center; justify-content: center; border-radius: 4px; }
.sprite { display: none; }
.icon { width: 24px; height: 24px; fill: currentColor; flex: none; }
.app { display: flex; height: 100%; }

/* Sidebar */
.sidebar { width: 321px; flex: none; background: #434343; border-right: 1px solid #2b2b2b; }
.logo { background: #fff; display: flex; justify-content: center; padding-right: 4px; }
.logo-img { width: 198px; height: 109px; display: block; }
.logo-text { font: 9px "Liberation Sans", Arial, sans-serif; fill: #222; }
.logo-strip { height: 23px; background: #262626; }
.nav { padding-top: 9px; }
.nav-item {
  display: flex;
  align-items: center;
  gap: 10px;
  height: 40px;
  padding-left: 16px;
  color: #f5f5f5;
  font: 700 17px "Open Sans", "Noto Sans", sans-serif;
  text-decoration: none;
}
.nav-item .icon { width: 26px; height: 26px; }
.nav-sub { border-bottom: 2px solid #5a5a5a; }
.nav-item.sub { height: 41px; padding-left: 38px; font-weight: 400; }
.nav-item.active { background: #0050a0; }

/* Header */
.main { flex: 1; min-width: 0; display: flex; flex-direction: column; }
.topbar { height: 76px; flex: none; background: #f6f7f9; display: flex; align-items: center; padding: 0 20px 0 11px; }
.menu-btn { width: 48px; height: 49px; background: #e9edf1; color: #0050a5; }
.register { margin-left: 9px; color: #333; }
.register-label { margin: 0; font-size: 15px; line-height: 18px; color: #555; }
.register-name { margin: 0; font-size: 24px; line-height: 30px; font-weight: 500; }
.user { margin-left: auto; display: flex; align-items: center; gap: 20px; color: #222; }
.user-name { display: flex; align-items: center; gap: 12px; padding-top: 6px; }
.user-icon { width: 28px; height: 28px; color: #000; }
.exit-btn { width: 45px; height: 45px; background: #e9edf1; color: #111; }
.exit-btn .icon { width: 28px; height: 28px; }

/* Split content */
.content { flex: 1; min-height: 0; display: grid; grid-template-columns: 642fr 10px 947fr; }
.map { position: relative; margin-left: 17px; overflow: hidden; background: #fffaef; }
.map-canvas { width: 100%; height: 100%; display: block; }
.splitter { background: #f3f4f6; display: flex; align-items: center; justify-content: center; padding-top: 98px; }
.splitter-grip { width: 4px; height: 40px; border-radius: 2px; background: #b4bbc8; }

/* Map symbols; each quarter is drawn on its own triple-density grid */
.nw { transform: translate(330px, 70px) scale(0.33333); }
.ne { transform: translate(640px, 70px) scale(0.33333); }
.sw { transform: translate(330px, 440px) scale(0.33333); }
.se { transform: translate(640px, 440px) scale(0.33333); }
.land { fill: #fffaef; }
.forest { fill: #b4d79e; }
.meadow { fill: #e4f1d0; }
.urban { fill: #eccfb9; }
.pond { fill: #a5c9e6; }
.river, .rail, .track, .village-line, .road-case, .road-fill, .hw-case, .hw-fill, .border-glow, .border-dash, .border-blue { fill: none; stroke-linejoin: round; }
.river { stroke: #7cc3cc; stroke-width: 6; }
.rail { stroke: #a8a49d; stroke-width: 3; }
.track { stroke: #d9cdba; stroke-width: 4; }
.road-case { stroke: #cdcdcd; stroke-width: 13; }
.road-fill { stroke: #f7f7f7; stroke-width: 8; }
.hw-case { stroke: #b5b19c; stroke-width: 15; }
.hw-fill { stroke: #fcf51c; stroke-width: 10; }
.border-glow { stroke: #d3948c; stroke-opacity: 0.75; stroke-width: 13; }
.border-dash { stroke: #a8654a; stroke-width: 3; stroke-dasharray: 18 6; }
.border-blue { stroke: #5a6cb0; stroke-width: 5; }
.village-line { stroke: #4798f8; stroke-width: 5; }
.squares { fill: #999; }
.dots { stroke: #21bbfd; stroke-width: 7; stroke-linecap: round; fill: none; }
.base-labels, .shield { font: bold 12px "DejaVu Sans", sans-serif; fill: #606060; }
.base-labels { font-size: 11px; stroke: #fffaef; stroke-width: 3px; stroke-linejoin: round; paint-order: stroke; }
.base-labels .town { font-size: 14px; }
.base-labels .seat { font-size: 13px; fill: #3c3c3c; }
.shield { font-size: 11px; }
.place-labels { font: 18px "Liberation Sans", Arial, sans-serif; fill: #33bbfd; stroke: #fff; stroke-width: 4px; stroke-linejoin: round; paint-order: stroke; }

/* Overlays on the map */
.map-search { position: absolute; left: 17px; top: 12px; display: flex; gap: 5px; padding: 5px 3px; background: #fff; border-radius: 6px; }
.search-box { display: flex; align-items: center; gap: 5px; background: #e6e9ee; border-radius: 4px; color: #6b7686; padding-left: 7px; }
.search-box .icon { width: 26px; height: 26px; }
.search-box input { flex: 1; min-width: 0; background: none; outline: 0; padding: 0; }
.search-box input::placeholder { color: #8a94a3; opacity: 1; }
.map-search .search-box { width: 217px; height: 40px; }
.more-btn { width: 48px; height: 40px; background: #f3f5f7; color: #1b2636; }
.map-tools { position: absolute; right: 6px; top: 12px; display: flex; flex-direction: column; gap: 9px; padding: 5px 4px 11px; background: rgba(255, 255, 255, 0.72); border-radius: 6px; }
.map-tools button { width: 44px; height: 34px; background: rgba(240, 242, 243, 0.85); color: #2b2b2b; }
.map-tools .icon { width: 26px; height: 26px; }
.map-tools button:nth-child(2) .icon { width: 22px; height: 22px; }
.map-zoom { position: absolute; right: 6px; bottom: -26px; width: 46px; height: 46px; background: #f3f5f7; border: 1px solid #3b4654; color: #1b2636; }

/* Register panel */
.panel { display: flex; min-width: 0; min-height: 0; background: #fff; }
.panel-body { flex: 1; min-width: 0; display: flex; flex-direction: column; }
.filters { padding: 9px 2px 13px 0; border-bottom: 1px solid #dfe3e9; color: #6b7686; }
.filters-head { display: flex; align-items: center; height: 28px; font-size: 17px; }
.icon.chevron { width: 16px; height: 16px; }
.filters-head .chevron { margin-right: 7px; margin-left: -1px; }
.funnel { width: 27px; height: 27px; margin-right: 4px; }
.count { margin-left: 12px; }
.filter-grid { display: grid; grid-template-columns: repeat(4, 1fr); gap: 28px; padding-top: 31px; }
.field { min-width: 0; }
.field label { display: block; font-size: 15px; line-height: 22px; margin-bottom: 8px; }
.field input, .select select { display: block; width: 100%; height: 41px; background: #e6e9ee; border-radius: 4px; padding: 0 12px; appearance: none; }
.select { position: relative; }
.select .chevron { position: absolute; right: 12px; top: 13px; color: #7d8794; pointer-events: none; }
.toolbar { display: flex; gap: 6px; padding: 6px 0 10px 5px; }
.tool { width: 47px; height: 40px; background: #f3f5f7; color: #0050a5; }
.tool .icon { width: 27px; height: 27px; }
.view-select { width: 188px; }
.view-select select { height: 40px; font-weight: 500; color: #2f3b4b; padding-right: 0; }
.fade { position: absolute; left: 118px; top: 0; width: 36px; height: 40px; background: linear-gradient(90deg, transparent, #e6e9ee); pointer-events: none; }
.table-search { width: 283px; height: 40px; }

/* Table */
.table-frame { flex: 1; min-height: 0; display: flex; border: 1px solid #d9dde3; border-bottom: 0; }
.table-clip { flex: 1; min-width: 0; overflow: hidden; }
.table { width: 963px; table-layout: fixed; border-collapse: separate; border-spacing: 0; }
.c-check { width: 67px; }
.c-actions { width: 136px; }
.c-status { width: 168px; }
.c-name { width: 184px; }
.c-simc { width: 188px; }
.c-kind { width: 220px; }
.table th, .table td { border-right: 1px solid #e0e3e9; border-bottom: 1px solid #e8ebef; padding: 0 0 0 18px; text-align: left; white-space: nowrap; }
.table th { height: 63px; padding-bottom: 2px; font-size: 15px; font-weight: 500; }
.table td { height: 55px; padding-top: 3px; font-size: 17px; }
.table tbody tr:nth-child(odd) td { height: 56px; background: #f3f4f7; }
.table td.actions { padding-top: 0; }
.table td.check, .table th.check { padding: 0; }
.check .icon { display: block; margin: 0 auto; color: #1b2636; }
.check input { appearance: none; display: block; width: 21px; height: 20px; margin: 0 auto; border-radius: 4px; background: #d9dde2; }
tr:nth-child(odd) .check input { background: #ced3dc; }
.table .sorted { color: #0050a5; }
.sort { width: 10px; height: 15px; margin-left: 10px; vertical-align: middle; fill: #d0d3d8; }
.sorted .sort { fill: #0050a5; }
.th-wide { display: inline-block; width: 129px; }
.actions button { display: inline-flex; width: 47px; height: 41px; margin: 0 5px 0 2px; background: #f3f5f7; color: #0050a5; vertical-align: middle; }
.actions button + button { margin: 0; }
tr:nth-child(odd) .actions button { background: #e8ebef; }
.actions .icon { width: 27px; height: 27px; }
.actions .icon:not(.info) { stroke: currentColor; stroke-width: 0.5; }

/* Scroll tracks */
.scrollbar { width: 24px; flex: none; background: #f1f1f1; display: flex; flex-direction: column; align-items: center; }
.scroll-up { width: 10px; height: 6px; margin: 10px 0 8px; fill: #a3a3a3; flex: none; }
.thumb { width: 18px; background: #c1c1c1; flex: 1; }
.inner .thumb { flex: none; height: 70%; }
```
